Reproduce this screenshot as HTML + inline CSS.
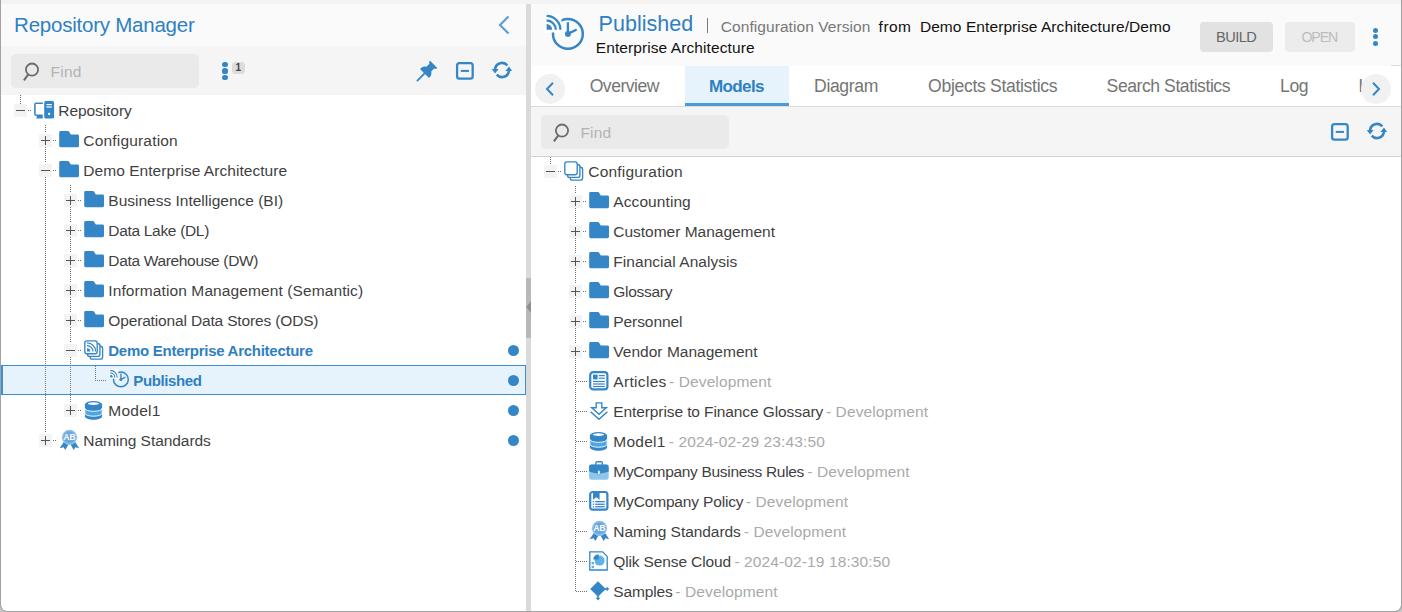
<!DOCTYPE html>
<html><head><meta charset="utf-8"><title>Repository Manager</title>
<style>
html,body{margin:0;padding:0}
body{width:1402px;height:612px;overflow:hidden;background:#f3f3f3;font-family:"Liberation Sans",sans-serif;position:relative}
#frame{position:absolute;left:0;top:0;width:1400px;height:611px;border:1px solid #a3a3a3;border-top:none;border-radius:0 0 7px 7px;pointer-events:none;z-index:50}
#left{position:absolute;left:1px;top:4px;width:525px;height:607px;background:#fff;border-radius:0 0 0 6px}
.layer{position:absolute;left:0;top:0;width:0;height:0}
.layer>*,#split>*{position:absolute}
#left,#right{margin:0}
.shift{position:absolute}
.abs{position:absolute}
.t{position:absolute;white-space:nowrap;display:block}
.hdr{width:525px;height:42px;background:#fafafa}
.hdr2{width:870px;height:62px;background:#fafafa}
.tb{width:525px;background:#f5f5f5;box-sizing:border-box}
.find{width:188px;height:34px;border-radius:5px;background:#eaeaea}
.dot{position:absolute;border-radius:50%;background:#3586c7}
.badge{left:231.5px;top:61.5px;width:13.5px;height:12.5px;border-radius:3.5px;background:#dcdcdc;color:#444;font-size:10px;font-weight:700;line-height:12.5px;text-align:center}
.ic{position:absolute;width:22px;height:21px}
.ic svg{display:block;overflow:visible}
.hd{position:absolute;height:1px;background-image:repeating-linear-gradient(to right,#727272 0,#727272 1px,transparent 1px,transparent 2px)}
.vd{position:absolute;width:1px;background-image:repeating-linear-gradient(to bottom,#727272 0,#727272 1px,transparent 1px,transparent 2px)}
.ex{position:absolute;width:13px;height:13px;background:#f3f3f3;z-index:2}
.ex .mh{position:absolute;left:2px;top:5.9px;width:9px;height:1.3px;background:#555}
.ex .mv{position:absolute;left:5.9px;top:2px;width:1.3px;height:9px;background:#555}
.sel{position:absolute;height:30px;box-sizing:border-box;background:#e7f3fc;border:1px solid #3d8fd3;border-left-width:2px}
#split{position:absolute;left:526px;top:4px;width:5px;height:607px;background:#dadada}
#split .grip{left:0;top:274px;width:5px;height:60px;background:#b8b8b8}
#right{position:absolute;left:531px;top:4px;width:870px;height:607px;background:#fff;border-radius:0 0 6px 0}
.btn{top:22px;height:30px;border-radius:4px}
.tabs{left:531px;top:66px;width:860px;height:40px;background:#fff}
.tabsel{left:685px;top:66px;width:104px;height:40px;background:#e7f3fc;box-sizing:border-box;border-bottom:3px solid #4a9ad9}
.circ{position:absolute;width:30px;height:30px;border-radius:50%;background:#f1f1f1}
</style></head>
<body>
<i class="abs" style="left:0;top:600px;width:12px;height:12px;background:#c6c6c6"></i><i class="abs" style="left:1390px;top:600px;width:12px;height:12px;background:#c6c6c6"></i>
<div id="left"></div><div class="layer">
<div class="hdr" style="left:1px;top:4px"></div>
<span class="t " style="left:14.1px;top:15.00px;font-size:20.5px;line-height:20px;color:#2f80c2;letter-spacing:-0.233px;">Repository Manager</span>
<svg class="abs" style="left:496px;top:14px" width="16" height="22" viewBox="0 0 16 22"><path d="M12.5 2.5 L4 11 L12.5 19.5" fill="none" stroke="#5a9fd6" stroke-width="2.2" stroke-linecap="butt" stroke-linejoin="miter"/></svg>
<div class="tb" style="left:1px;top:46px;height:49px"></div>
<div class="find" style="left:11px;top:54px"></div>
<svg class="abs" style="left:23px;top:61px" width="18" height="22" viewBox="0 0 18 22"><circle cx="9" cy="8.6" r="6.1" fill="none" stroke="#6c6c6c" stroke-width="1.8"/><path d="M5.3 13.4 L0.9 19.4" stroke="#6c6c6c" stroke-width="2.1" stroke-linecap="butt"/></svg>
<span class="t " style="left:50.6px;top:62.00px;font-size:15.5px;line-height:20px;color:#b3b3b3;letter-spacing:0.195px;">Find</span>
<i class="dot" style="left:222.45px;top:61.95px;width:5.1px;height:5.1px"></i>
<i class="dot" style="left:222.45px;top:68.45px;width:5.1px;height:5.1px"></i>
<i class="dot" style="left:222.45px;top:74.85000000000001px;width:5.1px;height:5.1px"></i>
<div class="badge">1</div>
<div class="ic" style="left:416px;top:60px"><svg width="22" height="22" viewBox="0 0 22 22"><path d="M14.1 0.7 L21.3 7.9 L19.9 9.0 L18.2 8.6 L15.2 11.6 Q16.2 15.2 13 18 L4 9 Q6.8 5.8 10.4 6.8 L13.4 3.8 L13 2.1 Z" fill="#3586c7"/><path d="M8.6 13.4 L1.4 20.6" stroke="#3586c7" stroke-width="1.8" stroke-linecap="round"/></svg></div>
<div class="ic" style="left:455px;top:61px"><svg width="20" height="20" viewBox="0 0 20 20"><rect x="2.1" y="2.1" width="15.6" height="15.6" rx="2.4" fill="none" stroke="#3586c7" stroke-width="2.3"/><rect x="5.8" y="8.9" width="8.2" height="2" fill="#3586c7"/></svg></div>
<div class="ic" style="left:491px;top:60px"><svg width="22" height="20" viewBox="0 0 22 20"><path d="M4.1 9.2 A7 7 0 0 1 16.3 5.3" fill="none" stroke="#3586c7" stroke-width="2.6"/><path d="M17.9 10.8 A7 7 0 0 1 5.7 14.7" fill="none" stroke="#3586c7" stroke-width="2.6"/><path d="M0.8 9 L7.6 9 L4 13.4 Z" fill="#3586c7"/><path d="M21.2 11 L14.4 11 L18 6.6 Z" fill="#3586c7"/></svg></div>
<div class="sel" style="left:1px;top:365px;width:525px"></div>
<i class="ex" style="left:14px;top:104px"><b class="mh"></b></i>
<i class="hd" style="left:28px;top:110px;width:4px"></i>
<div class="ic" style="left:34px;top:100px"><svg width="22" height="20" viewBox="0 0 22 20"><path d="M8.9 3.2 H2.2 Q0.9 3.2 0.9 4.5 V14 Q0.9 15.3 2.2 15.3 H8.6" fill="none" stroke="#3586c7" stroke-width="1.6"/><path d="M3 15.5 H8.8 V18.4 H2.2 Q2.9 17.3 3 15.5 Z" fill="#3586c7"/><rect x="10.2" y="1.1" width="9.9" height="17.4" rx="1.6" fill="#3586c7"/><rect x="12.4" y="4" width="5.4" height="1.2" fill="#fff"/><rect x="12.4" y="6.4" width="5.4" height="1.2" fill="#fff"/><circle cx="15.1" cy="14" r="1.15" fill="#fff"/></svg></div>
<span class="t " style="left:58.3px;top:101.00px;font-size:15.5px;line-height:20px;color:#3f3f3f;letter-spacing:-0.073px;">Repository</span>
<i class="ex" style="left:39px;top:134px"><b class="mh"></b><b class="mv"></b></i>
<i class="hd" style="left:53px;top:140px;width:4px"></i>
<div class="ic" style="left:59px;top:130px"><svg width="22" height="20" viewBox="0 0 22 20"><path d="M1.6 1.1 H8.9 Q9.8 1.1 10.3 1.9 L11.3 3.7 Q11.8 4.6 12.8 4.6 H18.6 Q20 4.6 20 6 V15.8 Q20 17.2 18.6 17.2 H1.6 Q0.2 17.2 0.2 15.8 V2.5 Q0.2 1.1 1.6 1.1 Z" fill="#3586c7"/></svg></div>
<span class="t " style="left:83.3px;top:131.00px;font-size:15.5px;line-height:20px;color:#3f3f3f;letter-spacing:0.186px;">Configuration</span>
<i class="ex" style="left:39px;top:164px"><b class="mh"></b></i>
<i class="hd" style="left:53px;top:170px;width:4px"></i>
<div class="ic" style="left:59px;top:160px"><svg width="22" height="20" viewBox="0 0 22 20"><path d="M1.6 1.1 H8.9 Q9.8 1.1 10.3 1.9 L11.3 3.7 Q11.8 4.6 12.8 4.6 H18.6 Q20 4.6 20 6 V15.8 Q20 17.2 18.6 17.2 H1.6 Q0.2 17.2 0.2 15.8 V2.5 Q0.2 1.1 1.6 1.1 Z" fill="#3586c7"/></svg></div>
<span class="t " style="left:83.3px;top:161.00px;font-size:15.5px;line-height:20px;color:#3f3f3f;letter-spacing:0.051px;">Demo Enterprise Architecture</span>
<i class="ex" style="left:64px;top:194px"><b class="mh"></b><b class="mv"></b></i>
<i class="hd" style="left:78px;top:200px;width:4px"></i>
<div class="ic" style="left:84px;top:190px"><svg width="22" height="20" viewBox="0 0 22 20"><path d="M1.6 1.1 H8.9 Q9.8 1.1 10.3 1.9 L11.3 3.7 Q11.8 4.6 12.8 4.6 H18.6 Q20 4.6 20 6 V15.8 Q20 17.2 18.6 17.2 H1.6 Q0.2 17.2 0.2 15.8 V2.5 Q0.2 1.1 1.6 1.1 Z" fill="#3586c7"/></svg></div>
<span class="t " style="left:108.3px;top:191.00px;font-size:15.5px;line-height:20px;color:#3f3f3f;letter-spacing:-0.002px;">Business Intelligence (BI)</span>
<i class="ex" style="left:64px;top:224px"><b class="mh"></b><b class="mv"></b></i>
<i class="hd" style="left:78px;top:230px;width:4px"></i>
<div class="ic" style="left:84px;top:220px"><svg width="22" height="20" viewBox="0 0 22 20"><path d="M1.6 1.1 H8.9 Q9.8 1.1 10.3 1.9 L11.3 3.7 Q11.8 4.6 12.8 4.6 H18.6 Q20 4.6 20 6 V15.8 Q20 17.2 18.6 17.2 H1.6 Q0.2 17.2 0.2 15.8 V2.5 Q0.2 1.1 1.6 1.1 Z" fill="#3586c7"/></svg></div>
<span class="t " style="left:108.3px;top:221.00px;font-size:15.5px;line-height:20px;color:#3f3f3f;letter-spacing:-0.313px;">Data Lake (DL)</span>
<i class="ex" style="left:64px;top:254px"><b class="mh"></b><b class="mv"></b></i>
<i class="hd" style="left:78px;top:260px;width:4px"></i>
<div class="ic" style="left:84px;top:250px"><svg width="22" height="20" viewBox="0 0 22 20"><path d="M1.6 1.1 H8.9 Q9.8 1.1 10.3 1.9 L11.3 3.7 Q11.8 4.6 12.8 4.6 H18.6 Q20 4.6 20 6 V15.8 Q20 17.2 18.6 17.2 H1.6 Q0.2 17.2 0.2 15.8 V2.5 Q0.2 1.1 1.6 1.1 Z" fill="#3586c7"/></svg></div>
<span class="t " style="left:108.3px;top:251.00px;font-size:15.5px;line-height:20px;color:#3f3f3f;letter-spacing:-0.331px;">Data Warehouse (DW)</span>
<i class="ex" style="left:64px;top:284px"><b class="mh"></b><b class="mv"></b></i>
<i class="hd" style="left:78px;top:290px;width:4px"></i>
<div class="ic" style="left:84px;top:280px"><svg width="22" height="20" viewBox="0 0 22 20"><path d="M1.6 1.1 H8.9 Q9.8 1.1 10.3 1.9 L11.3 3.7 Q11.8 4.6 12.8 4.6 H18.6 Q20 4.6 20 6 V15.8 Q20 17.2 18.6 17.2 H1.6 Q0.2 17.2 0.2 15.8 V2.5 Q0.2 1.1 1.6 1.1 Z" fill="#3586c7"/></svg></div>
<span class="t " style="left:108.3px;top:281.00px;font-size:15.5px;line-height:20px;color:#3f3f3f;letter-spacing:0.102px;">Information Management (Semantic)</span>
<i class="ex" style="left:64px;top:314px"><b class="mh"></b><b class="mv"></b></i>
<i class="hd" style="left:78px;top:320px;width:4px"></i>
<div class="ic" style="left:84px;top:310px"><svg width="22" height="20" viewBox="0 0 22 20"><path d="M1.6 1.1 H8.9 Q9.8 1.1 10.3 1.9 L11.3 3.7 Q11.8 4.6 12.8 4.6 H18.6 Q20 4.6 20 6 V15.8 Q20 17.2 18.6 17.2 H1.6 Q0.2 17.2 0.2 15.8 V2.5 Q0.2 1.1 1.6 1.1 Z" fill="#3586c7"/></svg></div>
<span class="t " style="left:108.3px;top:311.00px;font-size:15.5px;line-height:20px;color:#3f3f3f;letter-spacing:-0.153px;">Operational Data Stores (ODS)</span>
<i class="ex" style="left:64px;top:344px"><b class="mh"></b></i>
<i class="hd" style="left:78px;top:350px;width:4px"></i>
<div class="ic" style="left:84px;top:340px"><svg width="22" height="21" viewBox="0 0 22 21"><rect x="6.2" y="6.2" width="12.4" height="12.9" rx="2.2" fill="#fff" stroke="#3586c7" stroke-width="1.35"/><rect x="3.5" y="3.5" width="12.4" height="12.9" rx="2.2" fill="#fff" stroke="#3586c7" stroke-width="1.35"/><rect x="0.8" y="0.8" width="12.4" height="12.9" rx="2.2" fill="#fff" stroke="#3586c7" stroke-width="1.35"/><path d="M3 8.3 A3.3 3.3 0 0 1 6.3 11.6 H3 Z" fill="#3586c7"/><path d="M3 5.6 A6 6 0 0 1 9 11.6" fill="none" stroke="#3586c7" stroke-width="1.3"/><path d="M3 2.9 A8.7 8.7 0 0 1 11.7 11.6" fill="none" stroke="#3586c7" stroke-width="1.3"/></svg></div>
<span class="t " style="left:108.3px;top:341.00px;font-size:15px;line-height:20px;color:#2f80c2;font-weight:700;letter-spacing:-0.271px;">Demo Enterprise Architecture</span>
<i class="dot" style="left:508px;top:344.5px;width:11px;height:11px"></i>
<div class="ic" style="left:109px;top:370px"><svg width="23" height="21" viewBox="0 0 23 21"><circle cx="11.9" cy="9.4" r="7.4" fill="none" stroke="#3586c7" stroke-width="1.5"/><rect x="0" y="-1" width="9.2" height="9.6" fill="#fff"/><path d="M1.2 4.800000000000001 A2.6 2.6 0 0 1 3.8 7.4 H1.2 Z" fill="#3586c7"/><path d="M1.2 2.8000000000000007 A4.6 4.6 0 0 1 5.8 7.4" fill="none" stroke="#3586c7" stroke-width="1.2"/><path d="M1.2 0.40000000000000036 A7.0 7.0 0 0 1 8.2 7.4" fill="none" stroke="#3586c7" stroke-width="1.2"/><circle cx="11.9" cy="9.4" r="1.5" fill="#3586c7"/><path d="M11.9 9.4 V3.6 M11.9 9.4 L16.4 7.2" stroke="#3586c7" stroke-width="1.3" fill="none"/></svg></div>
<span class="t " style="left:133.3px;top:371.00px;font-size:15px;line-height:20px;color:#2f80c2;font-weight:700;letter-spacing:-0.398px;">Published</span>
<i class="dot" style="left:508px;top:374.5px;width:11px;height:11px"></i>
<i class="ex" style="left:64px;top:404px"><b class="mh"></b><b class="mv"></b></i>
<i class="hd" style="left:78px;top:410px;width:4px"></i>
<div class="ic" style="left:84px;top:400px"><svg width="22" height="21" viewBox="0 0 22 21"><path d="M0.9 4.6 V16 C0.9 21 18.1 21 18.1 16 V4.6 Z" fill="#3586c7"/><ellipse cx="9.5" cy="4.6" rx="8.6" ry="3.7" fill="#3586c7"/><ellipse cx="9.5" cy="3.6" rx="5.7" ry="1.35" fill="#fff"/><path d="M0.9 8.3 C0.9 12.3 18.1 12.3 18.1 8.3 V13.2 C18.1 17.2 0.9 17.2 0.9 13.2 Z" fill="#4ea5e2" stroke="#fff" stroke-width="0.9"/></svg></div>
<span class="t " style="left:108.3px;top:401.00px;font-size:15.5px;line-height:20px;color:#3f3f3f;letter-spacing:0.239px;">Model1</span>
<i class="dot" style="left:508px;top:404.5px;width:11px;height:11px"></i>
<i class="ex" style="left:39px;top:434px"><b class="mh"></b><b class="mv"></b></i>
<i class="hd" style="left:53px;top:440px;width:4px"></i>
<div class="ic" style="left:59px;top:430px"><svg width="22" height="21" viewBox="0 0 22 21"><path d="M5.2 11.5 L0.6 18.2 L4.6 17.3 L6.3 20 L10 13.5 Z" fill="#3586c7"/><path d="M15.8 11.5 L20.2 18.2 L16.4 17.3 L14.7 20 L11 13.5 Z" fill="#3586c7"/><circle cx="10.5" cy="7.3" r="7.6" fill="#8fbfe8"/><circle cx="10.5" cy="7.3" r="6" fill="#6ba8de"/><text x="10.5" y="10" text-anchor="middle" font-family="Liberation Sans, sans-serif" font-weight="700" font-size="8.2" fill="#fff">AB</text></svg></div>
<span class="t " style="left:83.3px;top:431.00px;font-size:15.5px;line-height:20px;color:#3f3f3f;letter-spacing:-0.056px;">Naming Standards</span>
<i class="dot" style="left:508px;top:434.5px;width:11px;height:11px"></i>
<i class="vd" style="left:20px;top:95px;height:9px"></i>
<i class="vd" style="left:45px;top:125px;height:8px"></i>
<i class="vd" style="left:45px;top:147px;height:16px"></i>
<i class="vd" style="left:45px;top:177px;height:256px"></i>
<i class="vd" style="left:70px;top:185px;height:8px"></i>
<i class="vd" style="left:70px;top:207px;height:16px"></i>
<i class="vd" style="left:70px;top:237px;height:16px"></i>
<i class="vd" style="left:70px;top:267px;height:16px"></i>
<i class="vd" style="left:70px;top:297px;height:16px"></i>
<i class="vd" style="left:70px;top:327px;height:16px"></i>
<i class="vd" style="left:70px;top:357px;height:46px"></i>
<i class="vd" style="left:95px;top:366px;height:14px"></i>
<i class="hd" style="left:95px;top:380px;width:11px"></i>
</div>
<div id="split"><div class="grip"></div><svg class="abs" style="left:0;top:296px" width="5" height="14" viewBox="0 0 5 14"><path d="M5 1 L0.3 7 L5 13 Z" fill="#8f8f8f"/></svg></div>
<div id="right"></div><div class="layer">
<div class="hdr2" style="left:531px;top:4px"></div>
<div class="ic" style="left:545px;top:13px"><svg width="42" height="40" viewBox="0 0 42 40"><circle cx="22.9" cy="20.9" r="14.9" fill="none" stroke="#3586c7" stroke-width="2.5"/><rect x="-1" y="1.3" width="17.5" height="18.2" fill="#fff"/><path d="M1.6 11.1 A5.6 5.6 0 0 1 7.199999999999999 16.7 H1.6 Z" fill="#3586c7"/><path d="M1.6 7.5 A9.2 9.2 0 0 1 10.799999999999999 16.7" fill="none" stroke="#3586c7" stroke-width="2.3"/><path d="M1.6 2.8999999999999986 A13.8 13.8 0 0 1 15.4 16.7" fill="none" stroke="#3586c7" stroke-width="2.3"/><circle cx="22.9" cy="20.9" r="2.9" fill="#3586c7"/><path d="M22.9 20.9 V9.2 M22.9 20.9 L31.7 16.5" stroke="#3586c7" stroke-width="2.3" fill="none"/></svg></div>
<span class="t " style="left:598.6px;top:14.00px;font-size:21.5px;line-height:20px;color:#2f80c2;letter-spacing:0.035px;">Published</span>
<i class="abs" style="left:707px;top:18px;width:1px;height:15px;background:#7a7a7a"></i>
<span class="t " style="left:720.8px;top:17.00px;font-size:15.5px;line-height:20px;color:#777;letter-spacing:0.066px;">Configuration Version</span>
<span class="t " style="left:878.6px;top:17.00px;font-size:15.5px;line-height:20px;color:#111;letter-spacing:0.480px;">from</span>
<span class="t " style="left:919.9px;top:17.00px;font-size:15.5px;line-height:20px;color:#111;letter-spacing:0.082px;">Demo Enterprise Architecture/Demo</span>
<span class="t " style="left:595.8px;top:38.00px;font-size:15.5px;line-height:20px;color:#111;letter-spacing:0.088px;">Enterprise Architecture</span>
<div class="btn" style="left:1200px;width:73px;background:#e2e2e2"></div>
<span class="t " style="left:1216.1px;top:27.00px;font-size:14.6px;line-height:20px;color:#666;letter-spacing:-0.579px;">BUILD</span>
<div class="btn" style="left:1285px;width:70px;background:#ececec"></div>
<span class="t " style="left:1301.5px;top:27.00px;font-size:14.2px;line-height:20px;color:#bdbdbd;letter-spacing:-1.161px;">OPEN</span>
<i class="dot" style="left:1372.5px;top:27.8px;width:5px;height:5px"></i>
<i class="dot" style="left:1372.5px;top:34.2px;width:5px;height:5px"></i>
<i class="dot" style="left:1372.5px;top:40.6px;width:5px;height:5px"></i>
<div class="tabs"></div><i class="abs" style="left:1391px;top:65px;width:10px;height:1px;background:#dcdcdc"></i>
<div class="tabsel"></div>
<span class="t " style="left:589.7px;top:76.00px;font-size:17.6px;line-height:20px;color:#757575;letter-spacing:-0.503px;">Overview</span>
<span class="t " style="left:709.1px;top:77.00px;font-size:17px;line-height:20px;color:#2f80c2;font-weight:700;letter-spacing:-0.641px;">Models</span>
<span class="t " style="left:814.1px;top:76.00px;font-size:17.6px;line-height:20px;color:#757575;letter-spacing:-0.379px;">Diagram</span>
<span class="t " style="left:928.1px;top:76.00px;font-size:17.6px;line-height:20px;color:#757575;letter-spacing:-0.325px;">Objects Statistics</span>
<span class="t " style="left:1106.6px;top:76.00px;font-size:17.6px;line-height:20px;color:#757575;letter-spacing:-0.445px;">Search Statistics</span>
<span class="t " style="left:1280.1px;top:76.00px;font-size:17.6px;line-height:20px;color:#757575;letter-spacing:-0.476px;">Log</span>
<div class="abs" style="left:1355px;top:70px;width:7.5px;height:34px;overflow:hidden"><span class="t " style="left:3.4px;top:6.00px;font-size:17.6px;line-height:20px;color:#757575;">Lineage</span></div>
<i class="circ" style="left:535px;top:74px"></i>
<svg class="abs" style="left:544px;top:80.5px" width="12" height="16" viewBox="0 0 12 16"><path d="M9 1.8 L3 8 L9 14.2" fill="none" stroke="#3586c7" stroke-width="2"/></svg>
<i class="circ" style="left:1361px;top:74px"></i>
<svg class="abs" style="left:1370px;top:80.5px" width="12" height="16" viewBox="0 0 12 16"><path d="M3 1.8 L9 8 L3 14.2" fill="none" stroke="#3586c7" stroke-width="2"/></svg>
<div class="tb" style="top:106px;height:51px;left:531px;width:870px;border-top:1px solid #dcdcdc;border-bottom:1px solid #d2d2d2"></div>
<div class="find" style="left:541px;top:115px"></div>
<svg class="abs" style="left:553px;top:122px" width="18" height="22" viewBox="0 0 18 22"><circle cx="9" cy="8.6" r="6.1" fill="none" stroke="#6c6c6c" stroke-width="1.8"/><path d="M5.3 13.4 L0.9 19.4" stroke="#6c6c6c" stroke-width="2.1" stroke-linecap="butt"/></svg>
<span class="t " style="left:580.4px;top:123.00px;font-size:15.5px;line-height:20px;color:#b3b3b3;letter-spacing:0.195px;">Find</span>
<div class="ic" style="left:1330px;top:122px"><svg width="20" height="20" viewBox="0 0 20 20"><rect x="2.1" y="2.1" width="15.6" height="15.6" rx="2.4" fill="none" stroke="#3586c7" stroke-width="2.3"/><rect x="5.8" y="8.9" width="8.2" height="2" fill="#3586c7"/></svg></div>
<div class="ic" style="left:1366px;top:121px"><svg width="22" height="20" viewBox="0 0 22 20"><path d="M4.1 9.2 A7 7 0 0 1 16.3 5.3" fill="none" stroke="#3586c7" stroke-width="2.6"/><path d="M17.9 10.8 A7 7 0 0 1 5.7 14.7" fill="none" stroke="#3586c7" stroke-width="2.6"/><path d="M0.8 9 L7.6 9 L4 13.4 Z" fill="#3586c7"/><path d="M21.2 11 L14.4 11 L18 6.6 Z" fill="#3586c7"/></svg></div>
<i class="ex" style="left:544px;top:165px"><b class="mh"></b></i>
<i class="hd" style="left:558px;top:171px;width:4px"></i>
<div class="ic" style="left:564px;top:161px"><svg width="22" height="21" viewBox="0 0 22 21"><rect x="6.2" y="6.2" width="12.4" height="12.9" rx="2.2" fill="#fff" stroke="#3586c7" stroke-width="1.35"/><rect x="3.5" y="3.5" width="12.4" height="12.9" rx="2.2" fill="#fff" stroke="#3586c7" stroke-width="1.35"/><rect x="0.8" y="0.8" width="12.4" height="12.9" rx="2.2" fill="#fff" stroke="#3586c7" stroke-width="1.35"/></svg></div>
<span class="t " style="left:588.3px;top:162.00px;font-size:15.5px;line-height:20px;color:#3f3f3f;letter-spacing:0.186px;">Configuration</span>
<i class="ex" style="left:569px;top:195px"><b class="mh"></b><b class="mv"></b></i>
<i class="hd" style="left:583px;top:201px;width:4px"></i>
<div class="ic" style="left:589px;top:191px"><svg width="22" height="20" viewBox="0 0 22 20"><path d="M1.6 1.1 H8.9 Q9.8 1.1 10.3 1.9 L11.3 3.7 Q11.8 4.6 12.8 4.6 H18.6 Q20 4.6 20 6 V15.8 Q20 17.2 18.6 17.2 H1.6 Q0.2 17.2 0.2 15.8 V2.5 Q0.2 1.1 1.6 1.1 Z" fill="#3586c7"/></svg></div>
<span class="t " style="left:613.3px;top:192.00px;font-size:15.5px;line-height:20px;color:#3f3f3f;letter-spacing:0.082px;">Accounting</span>
<i class="ex" style="left:569px;top:225px"><b class="mh"></b><b class="mv"></b></i>
<i class="hd" style="left:583px;top:231px;width:4px"></i>
<div class="ic" style="left:589px;top:221px"><svg width="22" height="20" viewBox="0 0 22 20"><path d="M1.6 1.1 H8.9 Q9.8 1.1 10.3 1.9 L11.3 3.7 Q11.8 4.6 12.8 4.6 H18.6 Q20 4.6 20 6 V15.8 Q20 17.2 18.6 17.2 H1.6 Q0.2 17.2 0.2 15.8 V2.5 Q0.2 1.1 1.6 1.1 Z" fill="#3586c7"/></svg></div>
<span class="t " style="left:613.3px;top:222.00px;font-size:15.5px;line-height:20px;color:#3f3f3f;letter-spacing:-0.013px;">Customer Management</span>
<i class="ex" style="left:569px;top:255px"><b class="mh"></b><b class="mv"></b></i>
<i class="hd" style="left:583px;top:261px;width:4px"></i>
<div class="ic" style="left:589px;top:251px"><svg width="22" height="20" viewBox="0 0 22 20"><path d="M1.6 1.1 H8.9 Q9.8 1.1 10.3 1.9 L11.3 3.7 Q11.8 4.6 12.8 4.6 H18.6 Q20 4.6 20 6 V15.8 Q20 17.2 18.6 17.2 H1.6 Q0.2 17.2 0.2 15.8 V2.5 Q0.2 1.1 1.6 1.1 Z" fill="#3586c7"/></svg></div>
<span class="t " style="left:613.3px;top:252.00px;font-size:15.5px;line-height:20px;color:#3f3f3f;letter-spacing:0.049px;">Financial Analysis</span>
<i class="ex" style="left:569px;top:285px"><b class="mh"></b><b class="mv"></b></i>
<i class="hd" style="left:583px;top:291px;width:4px"></i>
<div class="ic" style="left:589px;top:281px"><svg width="22" height="20" viewBox="0 0 22 20"><path d="M1.6 1.1 H8.9 Q9.8 1.1 10.3 1.9 L11.3 3.7 Q11.8 4.6 12.8 4.6 H18.6 Q20 4.6 20 6 V15.8 Q20 17.2 18.6 17.2 H1.6 Q0.2 17.2 0.2 15.8 V2.5 Q0.2 1.1 1.6 1.1 Z" fill="#3586c7"/></svg></div>
<span class="t " style="left:613.3px;top:282.00px;font-size:15.5px;line-height:20px;color:#3f3f3f;letter-spacing:-0.288px;">Glossary</span>
<i class="ex" style="left:569px;top:315px"><b class="mh"></b><b class="mv"></b></i>
<i class="hd" style="left:583px;top:321px;width:4px"></i>
<div class="ic" style="left:589px;top:311px"><svg width="22" height="20" viewBox="0 0 22 20"><path d="M1.6 1.1 H8.9 Q9.8 1.1 10.3 1.9 L11.3 3.7 Q11.8 4.6 12.8 4.6 H18.6 Q20 4.6 20 6 V15.8 Q20 17.2 18.6 17.2 H1.6 Q0.2 17.2 0.2 15.8 V2.5 Q0.2 1.1 1.6 1.1 Z" fill="#3586c7"/></svg></div>
<span class="t " style="left:613.3px;top:312.00px;font-size:15.5px;line-height:20px;color:#3f3f3f;letter-spacing:-0.082px;">Personnel</span>
<i class="ex" style="left:569px;top:345px"><b class="mh"></b><b class="mv"></b></i>
<i class="hd" style="left:583px;top:351px;width:4px"></i>
<div class="ic" style="left:589px;top:341px"><svg width="22" height="20" viewBox="0 0 22 20"><path d="M1.6 1.1 H8.9 Q9.8 1.1 10.3 1.9 L11.3 3.7 Q11.8 4.6 12.8 4.6 H18.6 Q20 4.6 20 6 V15.8 Q20 17.2 18.6 17.2 H1.6 Q0.2 17.2 0.2 15.8 V2.5 Q0.2 1.1 1.6 1.1 Z" fill="#3586c7"/></svg></div>
<span class="t " style="left:613.3px;top:342.00px;font-size:15.5px;line-height:20px;color:#3f3f3f;letter-spacing:0.021px;">Vendor Management</span>
<div class="ic" style="left:589px;top:371px"><svg width="22" height="21" viewBox="0 0 22 21"><rect x="1.2" y="1.2" width="17.2" height="17.2" rx="3" fill="#fff" stroke="#3586c7" stroke-width="2.2"/><rect x="4" y="3.6" width="4.6" height="4.8" fill="#3586c7"/><rect x="9.8" y="4" width="6" height="1.2" fill="#3586c7"/><rect x="9.8" y="6.6" width="6" height="1.2" fill="#3586c7"/><rect x="4" y="9.9" width="11.8" height="1.2" fill="#3586c7"/><rect x="4" y="12.4" width="11.8" height="1.2" fill="#3586c7"/><rect x="4" y="14.9" width="11.8" height="1.2" fill="#3586c7"/></svg></div>
<span class="t " style="left:613.3px;top:372.00px;font-size:15.5px;line-height:20px;color:#3f3f3f;letter-spacing:0.316px;">Articles</span>
<span class="t " style="left:669.0px;top:372.00px;font-size:15.5px;line-height:20px;color:#a9a9a9;letter-spacing:0.120px;">- Development</span>
<div class="ic" style="left:589px;top:401px"><svg width="22" height="21" viewBox="0 0 22 21"><path d="M7.2 1.9 H12.8 V6.8 H17.3 L10 13.3 L2.7 6.8 H7.2 Z" fill="#fff" stroke="#3586c7" stroke-width="1.4" stroke-linejoin="miter"/><path d="M1.6 10.8 L10 18.2 L18.4 10.8" fill="none" stroke="#3586c7" stroke-width="1.5"/></svg></div>
<span class="t " style="left:613.3px;top:402.00px;font-size:15.5px;line-height:20px;color:#3f3f3f;letter-spacing:-0.099px;">Enterprise to Finance Glossary</span>
<span class="t " style="left:825.9px;top:402.00px;font-size:15.5px;line-height:20px;color:#a9a9a9;letter-spacing:0.120px;">- Development</span>
<div class="ic" style="left:589px;top:431px"><svg width="22" height="21" viewBox="0 0 22 21"><path d="M0.9 4.6 V16 C0.9 21 18.1 21 18.1 16 V4.6 Z" fill="#3586c7"/><ellipse cx="9.5" cy="4.6" rx="8.6" ry="3.7" fill="#3586c7"/><ellipse cx="9.5" cy="3.6" rx="5.7" ry="1.35" fill="#fff"/><path d="M0.9 8.3 C0.9 12.3 18.1 12.3 18.1 8.3 V13.2 C18.1 17.2 0.9 17.2 0.9 13.2 Z" fill="#4ea5e2" stroke="#fff" stroke-width="0.9"/></svg></div>
<span class="t " style="left:613.3px;top:432.00px;font-size:15.5px;line-height:20px;color:#3f3f3f;letter-spacing:0.239px;">Model1</span>
<span class="t " style="left:668.7px;top:432.00px;font-size:15.5px;line-height:20px;color:#a9a9a9;letter-spacing:0.142px;">- 2024-02-29 23:43:50</span>
<div class="ic" style="left:589px;top:461px"><svg width="22" height="21" viewBox="0 0 22 21"><path d="M6.8 4 V2.2 Q6.8 0.8 8.2 0.8 H12 Q13.4 0.8 13.4 2.2 V4" fill="none" stroke="#3586c7" stroke-width="1.4"/><rect x="0.1" y="3.6" width="19.6" height="15.2" rx="2.4" fill="#8cc6ec"/><path d="M0.1 6 Q0.1 3.6 2.5 3.6 H17.3 Q19.7 3.6 19.7 6 V10.6 Q10 14.4 0.1 10.6 Z" fill="#3586c7"/><rect x="8.9" y="9.6" width="2.2" height="4.2" rx="0.8" fill="#fff" stroke="#3586c7" stroke-width="0.5"/></svg></div>
<span class="t " style="left:613.3px;top:462.00px;font-size:15.5px;line-height:20px;color:#3f3f3f;letter-spacing:-0.309px;">MyCompany Business Rules</span>
<span class="t " style="left:807.3px;top:462.00px;font-size:15.5px;line-height:20px;color:#a9a9a9;letter-spacing:0.120px;">- Development</span>
<div class="ic" style="left:589px;top:491px"><svg width="22" height="21" viewBox="0 0 22 21"><rect x="1.2" y="1.0" width="17.2" height="17.6" rx="2.4" fill="#fff" stroke="#3586c7" stroke-width="2.2"/><path d="M4 1.5 H10.6 V8.8 L7.3 6.2 L4 8.8 Z" fill="#3586c7"/><rect x="6.2" y="10" width="9.6" height="1.3" fill="#3586c7"/><rect x="6.2" y="12.6" width="9.6" height="1.3" fill="#3586c7"/><rect x="6.2" y="15.1" width="9.6" height="1.3" fill="#3586c7"/><rect x="3.8" y="10" width="1.3" height="1.3" fill="#3586c7"/><rect x="3.8" y="12.6" width="1.3" height="1.3" fill="#3586c7"/><rect x="3.8" y="15.1" width="1.3" height="1.3" fill="#3586c7"/></svg></div>
<span class="t " style="left:613.3px;top:492.00px;font-size:15.5px;line-height:20px;color:#3f3f3f;letter-spacing:-0.161px;">MyCompany Policy</span>
<span class="t " style="left:745.8px;top:492.00px;font-size:15.5px;line-height:20px;color:#a9a9a9;letter-spacing:0.120px;">- Development</span>
<div class="ic" style="left:589px;top:521px"><svg width="22" height="21" viewBox="0 0 22 21"><path d="M5.2 11.5 L0.6 18.2 L4.6 17.3 L6.3 20 L10 13.5 Z" fill="#3586c7"/><path d="M15.8 11.5 L20.2 18.2 L16.4 17.3 L14.7 20 L11 13.5 Z" fill="#3586c7"/><circle cx="10.5" cy="7.3" r="7.6" fill="#8fbfe8"/><circle cx="10.5" cy="7.3" r="6" fill="#6ba8de"/><text x="10.5" y="10" text-anchor="middle" font-family="Liberation Sans, sans-serif" font-weight="700" font-size="8.2" fill="#fff">AB</text></svg></div>
<span class="t " style="left:613.3px;top:522.00px;font-size:15.5px;line-height:20px;color:#3f3f3f;letter-spacing:-0.056px;">Naming Standards</span>
<span class="t " style="left:743.8px;top:522.00px;font-size:15.5px;line-height:20px;color:#a9a9a9;letter-spacing:0.120px;">- Development</span>
<div class="ic" style="left:589px;top:551px"><svg width="22" height="21" viewBox="0 0 22 21"><path d="M0.8 0.8 H13.6 L18.2 5.4 V19 H0.8 Z" fill="#fff" stroke="#3586c7" stroke-width="1.3"/><circle cx="10.6" cy="9.6" r="5" fill="#5cb3ea"/><path d="M9.6 8.6 V3.2 A5.4 5.4 0 0 0 4.2 8.6 Z" fill="#3586c7"/><rect x="2.6" y="11" width="2.4" height="2.4" fill="#5cb3ea"/><rect x="2.6" y="14.8" width="2.4" height="2.4" fill="#5cb3ea"/></svg></div>
<span class="t " style="left:613.3px;top:552.00px;font-size:15.5px;line-height:20px;color:#3f3f3f;letter-spacing:-0.135px;">Qlik Sense Cloud</span>
<span class="t " style="left:734.4px;top:552.00px;font-size:15.5px;line-height:20px;color:#a9a9a9;letter-spacing:0.117px;">- 2024-02-19 18:30:50</span>
<div class="ic" style="left:589px;top:581px"><svg width="22" height="21" viewBox="0 0 22 21"><path d="M9 0.2 L16.8 8 L9 15.8 L1.2 8 Z" fill="#3586c7"/><path d="M16 8 H18.5" stroke="#3586c7" stroke-width="1.6"/><path d="M17.6 5.6 L20.2 8 L17.6 10.4 Z" fill="#3586c7"/><path d="M9 15 V17.5" stroke="#3586c7" stroke-width="1.6"/><path d="M6.6 16.8 L9 19.6 L11.4 16.8 Z" fill="#3586c7"/></svg></div>
<span class="t " style="left:613.3px;top:582.00px;font-size:15.5px;line-height:20px;color:#3f3f3f;letter-spacing:-0.162px;">Samples</span>
<span class="t " style="left:675.3px;top:582.00px;font-size:15.5px;line-height:20px;color:#a9a9a9;letter-spacing:0.120px;">- Development</span>
<i class="vd" style="left:550px;top:157px;height:8px"></i>
<i class="vd" style="left:575px;top:186px;height:8px"></i>
<i class="vd" style="left:575px;top:208px;height:16px"></i>
<i class="vd" style="left:575px;top:238px;height:16px"></i>
<i class="vd" style="left:575px;top:268px;height:16px"></i>
<i class="vd" style="left:575px;top:298px;height:16px"></i>
<i class="vd" style="left:575px;top:328px;height:16px"></i>
<i class="vd" style="left:575px;top:358px;height:233px"></i>
<i class="hd" style="left:576px;top:381px;width:11px"></i>
<i class="hd" style="left:576px;top:411px;width:11px"></i>
<i class="hd" style="left:576px;top:441px;width:11px"></i>
<i class="hd" style="left:576px;top:471px;width:11px"></i>
<i class="hd" style="left:576px;top:501px;width:11px"></i>
<i class="hd" style="left:576px;top:531px;width:11px"></i>
<i class="hd" style="left:576px;top:561px;width:11px"></i>
<i class="hd" style="left:576px;top:591px;width:11px"></i>
</div>
<div id="frame"></div>
</body></html>
